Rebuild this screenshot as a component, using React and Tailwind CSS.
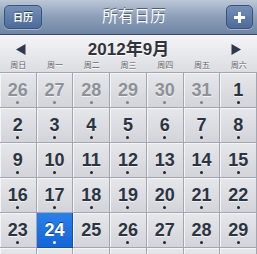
import React from 'react';

const weekdays = ['周日', '周一', '周二', '周三', '周四', '周五', '周六'];

const rows = [
  [[26, 'prev'], [27, 'prev'], [28, 'prev'], [29, 'prev'], [30, 'prev'], [31, 'prev'], [1]],
  [[2], [3], [4], [5], [6], [7], [8]],
  [[9], [10], [11], [12], [13], [14], [15]],
  [[16], [17], [18], [19], [20], [21], [22]],
  [[23], [24, 'today'], [25, 'nodot'], [26], [27], [28], [29]],
];

function DayCell({ day, kind }) {
  const today = kind === 'today';
  const muted = kind === 'prev';
  const showDot = kind !== 'nodot' && day != null;
  return (
    <div
      className={`flex h-[35px] flex-col items-center border-r border-b pt-[8px] ${
        today
          ? 'border-[#1a4f9c] bg-gradient-to-b from-[#2a80ea] to-[#1465d6]'
          : 'border-[#a3a6ae] bg-gradient-to-b from-[#e6e7eb] to-[#d3d4d9] shadow-[inset_1px_1px_0_#f4f5f7]'
      }`}
    >
      {day != null && (
        <span
          className={`text-[18px] font-bold leading-none ${
            today ? 'text-white [text-shadow:0_-1px_0_#0d3f85]' : muted ? 'text-[#8e9197] [text-shadow:0_1px_0_#f2f2f4]' : 'text-[#2b3441] [text-shadow:0_1px_0_#f2f2f4]'
          }`}
        >
          {day}
        </span>
      )}
      {showDot && (
        <span className={`mt-[2px] h-[3px] w-[3px] rounded-full ${today ? 'bg-white' : muted ? 'bg-[#7d8087]' : 'bg-[#1f2733]'}`} />
      )}
    </div>
  );
}

export default function App() {
  return (
    <div className="h-[254px] w-[257px] overflow-hidden bg-[#d3d4d9] font-['Liberation_Sans','Noto_Sans_CJK_SC',sans-serif]">
      <div className="flex h-[35px] items-center justify-between border-b border-[#3b4a60] bg-gradient-to-b from-[#bcc7d6] via-[#8c9fb8] to-[#6e85a4] px-[4px]">
        <button
          type="button"
          className="flex h-[24px] w-[38px] items-center justify-center rounded-[5px] border border-[#3c5278] bg-gradient-to-b from-[#7690b7] to-[#4b6b9c] text-[10px] font-bold text-white shadow-[0_1px_0_rgba(255,255,255,0.35)] [text-shadow:0_-1px_0_#2c3f5e]"
        >
          日历
        </button>
        <span className="text-[16px] font-normal text-white [text-shadow:0_-1px_0_#4e6280]">所有日历</span>
        <button
          type="button"
          className="flex h-[24px] w-[27px] items-center justify-center rounded-[5px] border border-[#3c5278] bg-gradient-to-b from-[#7690b7] to-[#4b6b9c] shadow-[0_1px_0_rgba(255,255,255,0.35)]"
        >
          <svg width="11" height="11" viewBox="0 0 11 11">
            <path d="M4 0h3v4h4v3H7v4H4V7H0V4h4z" fill="#fff" />
          </svg>
        </button>
      </div>

      <div className="border-b border-[#a3a6ae] bg-gradient-to-b from-[#f5f5f7] to-[#dcdde1]">
        <div className="flex h-[26px] items-center justify-between px-[16px] pt-[2px]">
          <svg width="10" height="11" viewBox="0 0 10 11">
            <path d="M0 5.5L9.5 0v11z" fill="#2e3a4b" />
          </svg>
          <span className="text-[17px] font-bold leading-none text-[#30343a] [text-shadow:0_1px_0_#fff]">2012年9月</span>
          <svg width="10" height="11" viewBox="0 0 10 11">
            <path d="M10 5.5L0.5 0v11z" fill="#2e3a4b" />
          </svg>
        </div>
        <div className="grid h-[11px] grid-cols-7">
          {weekdays.map((w) => (
            <span key={w} className="text-center text-[8px] leading-[9px] text-[#5e6167] [text-shadow:0_1px_0_#fff]">
              {w}
            </span>
          ))}
        </div>
      </div>

      <div className="grid grid-cols-7">
        {rows.flat().map(([day, kind], i) => (
          <DayCell key={i} day={day} kind={kind} />
        ))}
        {weekdays.map((w) => (
          <DayCell key={`next-${w}`} day={null} />
        ))}
      </div>
    </div>
  );
}
